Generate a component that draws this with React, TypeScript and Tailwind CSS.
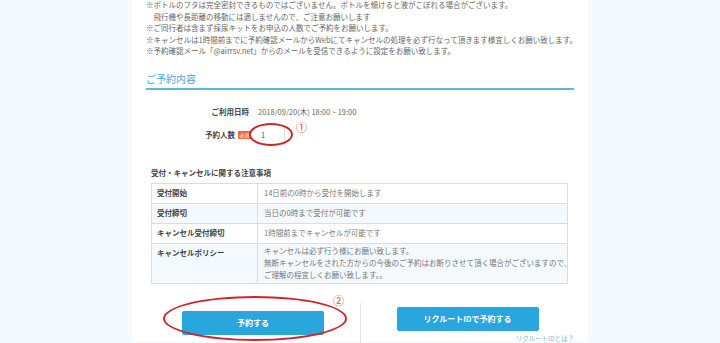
import React from 'react';

const notes = [
  '※ボトルのフタは完全密封できるものではございません。ボトルを傾けると液がこぼれる場合がございます。',
  '　飛行機や長距離の移動には適しませんので、ご注意お願いします',
  '※ご同行者は含まず採尿キットをお申込の人数でご予約をお願いします。',
  '※キャンセルは1時間前までに予約確認メールからWebにてキャンセルの処理を必ず行なって頂きます様宜しくお願い致します。',
  '※予約確認メール「@airrsv.net」からのメールを受信できるように設定をお願い致します。',
];

const rules = [
  { label: '受付開始', body: ['14日前の0時から受付を開始します'] },
  { label: '受付締切', body: ['当日の0時まで受付が可能です'] },
  { label: 'キャンセル受付締切', body: ['1時間前までキャンセルが可能です'] },
  {
    label: 'キャンセルポリシー',
    body: [
      'キャンセルは必ず行う様にお願い致します。',
      '無断キャンセルをされた方からの今後のご予約はお断りさせて頂く場合がございますので、',
      'ご理解の程宜しくお願い致します。。',
    ],
  },
];

export default function App() {
  return (
    <div
      className="w-[720px] h-[343px] overflow-hidden bg-[#f3f9fd]"
      style={{ fontFamily: '"Noto Sans CJK JP", "Noto Sans", sans-serif' }}
    >
      <div className="mx-auto w-[456px] h-full bg-white px-[14px]">
        {/* notes */}
        <div className="text-[7.5px] leading-[11.6px] text-[#666] whitespace-nowrap -mt-[1px]">
          {notes.map((n) => (
            <p key={n}>{n}</p>
          ))}
        </div>

        {/* section heading */}
        <h2 className="mt-[15px] text-[10px] leading-[14px] text-[#4aa9da] pb-[2px] border-b-2 border-[#5ab6e2]">
          ご予約内容
        </h2>

        {/* form */}
        <div className="mt-[16px] flex flex-col text-[7.5px] text-[#444]">
          <div className="flex items-center h-[12px]">
            <div className="w-[103px] text-right font-bold">ご利用日時</div>
            <div className="ml-[9px] text-[#666]">2018/09/20(木) 18:00 ~ 19:00</div>
          </div>
          <div className="flex items-center mt-[7px]">
            <div className="w-[105px] flex justify-end items-center gap-[3px]">
              <span className="font-bold">予約人数</span>
              <span className="bg-[#f0643c] text-white text-[5px] leading-[8px] px-[1.5px] rounded-[1px]">必須</span>
            </div>
            <div className="relative ml-[2px]">
              <div className="w-[32px] h-[20px] border-r border-[#ddd] flex items-center pl-[8px] text-[#555]">1</div>
              <div className="absolute -left-[4px] -top-[2px] w-[44px] h-[23px] rounded-[50%] border-2 border-[#d0242b]" />
              <span className="absolute left-[43px] -top-[4px] text-[11px] leading-[12px] text-[#e0393e]">①</span>
            </div>
          </div>
        </div>

        {/* rules table */}
        <div className="mt-[23px] px-[5px]">
          <p className="text-[7.5px] leading-[10px] font-bold text-[#444]">受付・キャンセルに関する注意事項</p>
          <div className="mt-[5px] w-[417px] border border-[#dcdcdc] text-[7.5px]">
            {rules.map((r, i) => (
              <div
                key={r.label}
                className={`flex ${r.body.length > 1 ? 'h-[40px]' : i === 0 ? 'h-[19px]' : 'h-[20px]'} ${i > 0 ? 'border-t border-[#dcdcdc]' : ''} ${i % 2 === 1 ? 'bg-[#f3f9fd]' : 'bg-white'}`}
              >
                <div className={`w-[106px] shrink-0 border-r border-[#dcdcdc] px-[5px] leading-[10px] font-semibold text-[#444] ${r.body.length > 1 ? 'pt-[4px]' : 'flex items-center'}`}>
                  {r.label}
                </div>
                <div className={`px-[6px] leading-[12px] text-[#777] ${r.body.length > 1 ? 'pt-[1px]' : 'flex items-center'}`}>
                  <div>
                    {r.body.map((b) => (
                      <p key={b} className="whitespace-nowrap">{b}</p>
                    ))}
                  </div>
                </div>
              </div>
            ))}
          </div>
        </div>

        {/* buttons */}
        <div className="mt-[19px] flex">
          <div className="w-[215px] flex justify-center pt-[4px] border-r border-[#e4e4e4]">
            <div className="relative">
              <button className="w-[142px] h-[24px] rounded-[2px] bg-[#2aa6df] text-white text-[8px] font-bold">
                予約する
              </button>
              <div className="absolute -left-[19px] -top-[11px] w-[184px] h-[45px] rounded-[50%] border-2 border-[#d0242b]" />
              <span className="absolute left-[151px] -top-[13px] text-[11px] leading-[12px] text-[#e0393e]">②</span>
            </div>
          </div>
          <div className="flex-1 flex flex-col items-center pt-[4px]">
            <button className="w-[142px] h-[24px] rounded-[2px] bg-[#2aa6df] text-white text-[8px] font-bold">
              リクルートIDで予約する
            </button>
            <a className="self-end mt-[3px] text-[6.5px] leading-[9px] text-[#6fb8e0]">リクルートIDとは？</a>
          </div>
        </div>
      </div>
    </div>
  );
}
